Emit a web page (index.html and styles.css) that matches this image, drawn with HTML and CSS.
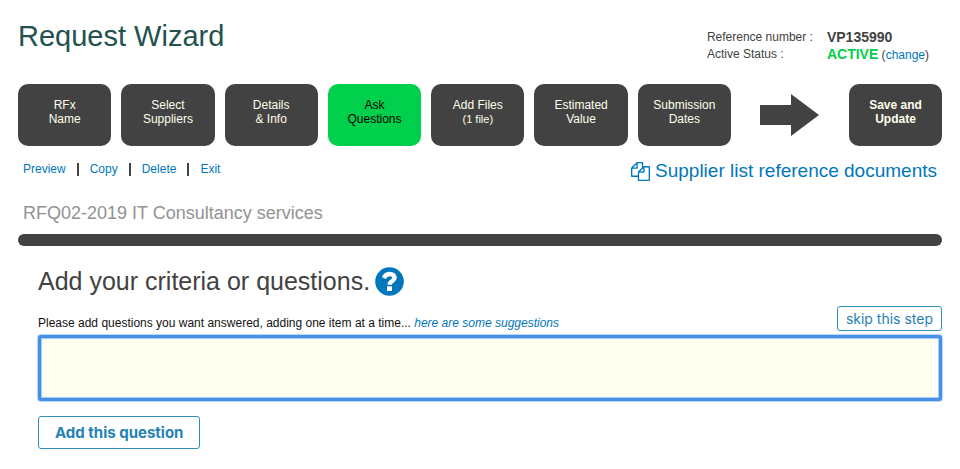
FILE: index.html
```html
<!DOCTYPE html>
<html lang="en">
  <head>
    <meta charset="UTF-8" />
    <meta name="viewport" content="width=device-width, initial-scale=1.0" />
    <title>Request Wizard</title>
    <link rel="stylesheet" href="styles.css" />
  </head>
  <body>
    <header class="top">
      <h1>Request Wizard</h1>
      <dl class="reference">
        <dt>Reference number :</dt>
        <dd><strong>VP135990</strong></dd>
        <dt>Active Status :</dt>
        <dd><strong class="active">ACTIVE</strong> (<a href="#">change</a>)</dd>
      </dl>
    </header>

    <nav class="steps">
      <button type="button" class="step">RFx<br />Name</button>
      <button type="button" class="step">Select<br />Suppliers</button>
      <button type="button" class="step">Details<br />&amp; Info</button>
      <button type="button" class="step selected">Ask<br />Questions</button>
      <button type="button" class="step">Add Files<br /><small>(1 file)</small></button>
      <button type="button" class="step">Estimated<br />Value</button>
      <button type="button" class="step">Submission<br />Dates</button>
      <svg class="arrow" viewBox="0 0 59 42" aria-hidden="true">
        <polygon points="0,11 31,11 31,0 59,21 31,42 31,31 0,31" />
      </svg>
      <button type="button" class="step save">Save and<br />Update</button>
    </nav>

    <div class="tools">
      <ul class="links">
        <li><a href="#">Preview</a></li>
        <li><a href="#">Copy</a></li>
        <li><a href="#">Delete</a></li>
        <li><a href="#">Exit</a></li>
      </ul>
      <a href="#" class="documents">
        <svg viewBox="0 0 1792 1792" aria-hidden="true">
          <path d="M1696 384q40 0 68 28t28 68v1216q0 40-28 68t-68 28h-960q-40 0-68-28t-28-68v-288h-544q-40 0-68-28t-28-68v-672q0-40 20-88t48-76l408-408q28-28 76-48t88-20h416q40 0 68 28t28 68v328q68-40 128-40h416zm-544 213l-299 299h299v-299zm-640-384l-299 299h299v-299zm196 647l316-316v-416h-384v416q0 40-28 68t-68 28h-416v640h512v-256q0-40 20-88t48-76zm956 804v-1152h-384v416q0 40-28 68t-68 28h-416v640h896z" />
        </svg>
        <span>Supplier list reference documents</span>
      </a>
    </div>

    <h2 class="requestName">RFQ02-2019 IT Consultancy services</h2>
    <hr class="bar" />

    <main class="content">
      <div class="heading">
        <h3>Add your criteria or questions.</h3>
        <a href="#" class="help" aria-label="Help">
          <svg viewBox="0 0 29 29" aria-hidden="true">
            <circle cx="14.5" cy="14.5" r="14.3" />
            <path d="M8.8 11C10 8.4 12 7 14.8 7C17.6 7 19.6 8.6 19.6 10.8C19.6 14 14.6 14 14.6 17.8" />
            <rect x="12" y="19.3" width="5" height="4.8" rx="0.4" />
          </svg>
        </a>
      </div>

      <form class="questionForm">
        <div class="intro">
          <p><label for="question">Please add questions you want answered, adding one item at a time...</label> <a href="#"><em>here are some suggestions</em></a></p>
          <button type="button" class="skip">skip this step</button>
        </div>
        <textarea id="question" autofocus></textarea>
        <button type="submit" class="add">Add this question</button>
      </form>
    </main>
  </body>
</html>
```
FILE: styles.css
```css
body {
  margin: 0;
  padding: 18px;
  font-family: "Liberation Sans", Arial, sans-serif;
  font-size: 12px;
  color: #424242;
  background: #fff;
}

h1,
h2,
h3,
p,
dl,
dd,
ul {
  margin: 0;
  padding: 0;
  font-weight: normal;
}

a {
  color: #0077bd;
  text-decoration: none;
}

a:hover {
  text-decoration: underline;
}

button {
  cursor: pointer;
}

/* header */
.top {
  display: flex;
  justify-content: space-between;
  align-items: flex-start;
  height: 66px;
}

h1 {
  font-size: 29px;
  line-height: 36px;
  color: #22514f;
}

.reference {
  display: grid;
  grid-template-columns: auto auto;
  column-gap: 14px;
  padding: 11px 13px 0 0;
  line-height: 16px;
}

.reference strong {
  font-size: 14px;
}

.reference .active {
  color: #00cf4b;
}

/* wizard steps */
.steps {
  display: grid;
  grid-template-columns: repeat(7, 1fr) 98px 93px;
  gap: 10px;
}

.step {
  height: 62px;
  padding: 0 0 6px;
  border: none;
  border-radius: 10px;
  font-family: inherit;
  font-size: 12px;
  line-height: 14px;
  color: #ffffed;
  background: #424242;
}

.step small {
  font-size: 11px;
}

.step.selected {
  color: #000;
  background: #00d04c;
}

.step.save {
  font-weight: bold;
}

.arrow {
  width: 59px;
  height: 42px;
  place-self: center;
  fill: #424242;
}

/* links under the steps */
.tools {
  display: flex;
  justify-content: space-between;
  align-items: flex-start;
  padding: 12px 5px 0;
}

.links {
  display: flex;
  list-style: none;
  line-height: 22px;
}

.links li {
  display: flex;
  align-items: center;
}

.links li + li::before {
  content: "";
  width: 2px;
  height: 13px;
  margin: 0 11px;
  background: #424242;
}

.documents {
  display: flex;
  align-items: center;
  gap: 5px;
  font-size: 19px;
  line-height: 26px;
}

.documents svg {
  width: 19px;
  height: 19px;
  fill: #0077bd;
}

.requestName {
  padding: 18px 5px 0;
  font-size: 18px;
  line-height: 22px;
  color: #929292;
}

.bar {
  height: 12px;
  margin: 10px 0 0;
  border: none;
  border-radius: 6px;
  background: #424242;
}

/* question form */
.content {
  padding: 20px 0 0 20px;
}

.heading {
  display: flex;
  align-items: center;
  gap: 5px;
}

h3 {
  font-size: 25px;
  line-height: 30px;
}

.help svg {
  display: block;
  width: 29px;
  height: 29px;
}

.help circle {
  fill: #0077bd;
}

.help path {
  fill: none;
  stroke: #fff;
  stroke-width: 4.4;
}

.help rect {
  fill: #fff;
}

.questionForm {
  margin-top: 10px;
}

.intro {
  display: flex;
  justify-content: space-between;
  align-items: flex-end;
  line-height: 16px;
  color: #111;
}

.skip,
.add {
  border: 1px solid #2f8fbd;
  border-radius: 3px;
  font-family: Inter, sans-serif;
  color: #2482b4;
  background: #fff;
}

.skip {
  height: 25px;
  padding: 0 8px;
  font-size: 14px;
}

textarea {
  display: block;
  box-sizing: border-box;
  width: 100%;
  height: 66px;
  margin: 4px 0 15px;
  padding: 0;
  border: 3px solid #478fe6;
  border-radius: 3px;
  outline: none;
  box-shadow: 0 0 1px 1px #b5d4fa, inset 0 0 1px 1px #a3c9f5;
  font-family: inherit;
  font-size: 13px;
  background: #fffff0;
  resize: none;
}

.add {
  height: 33px;
  padding: 0 16px;
  font-size: 15px;
  font-weight: bold;
}
```
